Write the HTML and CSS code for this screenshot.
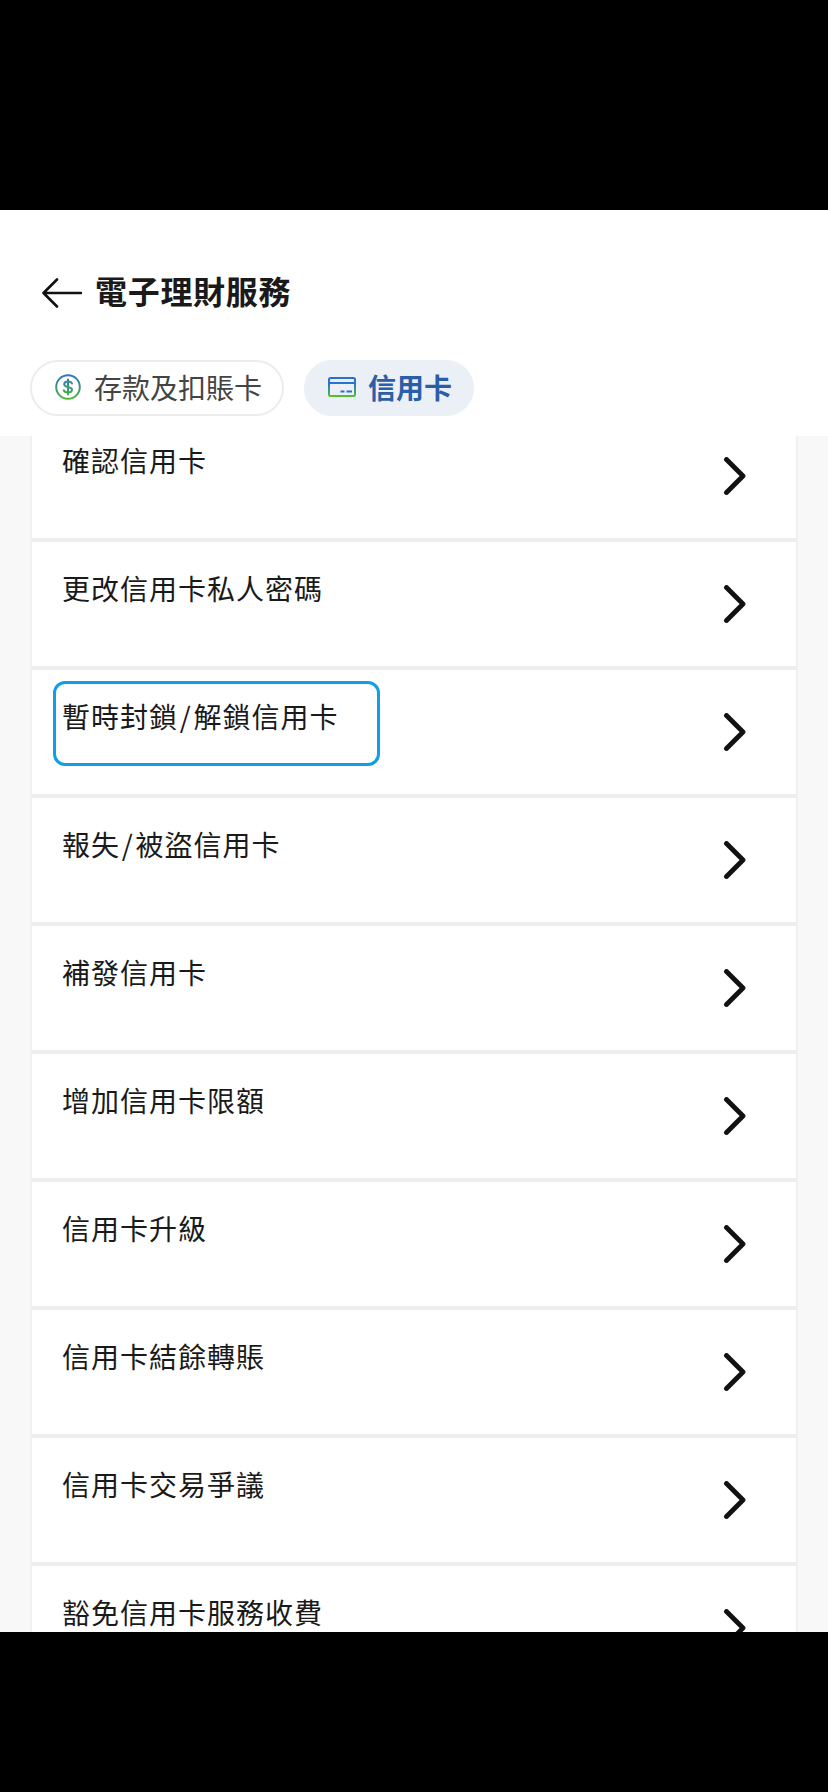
FILE: index.html
```html
<!DOCTYPE html>
<html lang="zh-Hant">
<head>
    <meta charset="UTF-8">
    <meta name="viewport" content="width=device-width, initial-scale=1.0">
    <title>電子理財服務</title>
    <link rel="stylesheet" href="styles.css">
</head>
<body>
    <div class="screen">
        <!-- Header -->
        <div class="header">
            <div class="title-bar">
                <svg class="back-icon" viewBox="0 0 40 30" fill="none" stroke="#111" stroke-width="2.6" stroke-linecap="round" stroke-linejoin="round">
                    <path d="M15 1.5L1.5 15L15 28.5M1.5 15H39"/>
                </svg>
                <h1>電子理財服務</h1>
            </div>
            <div class="tabs">
                <div class="tab">
                    <svg class="tab-icon" viewBox="0 0 26 26" fill="none" stroke="url(#dollarGrad)" stroke-width="2" stroke-linecap="round">
                        <defs>
                            <linearGradient id="dollarGrad" gradientUnits="userSpaceOnUse" x1="0" y1="0" x2="0" y2="26">
                                <stop offset="0" stop-color="#2a72d0"/>
                                <stop offset="1" stop-color="#4cbb2a"/>
                            </linearGradient>
                        </defs>
                        <circle cx="13" cy="13" r="11.8"/>
                        <path d="M17 9.6C16.6 8 15 7.4 13 7.4C10.8 7.4 9.2 8.4 9.2 10.2C9.2 14 17 12 17 15.8C17 17.6 15.2 18.4 13 18.4C10.8 18.4 9.2 17.8 8.8 16.2M13 5.4V20.6"/>
                    </svg>
                    <span>存款及扣賬卡</span>
                </div>
                <div class="tab active">
                    <svg class="tab-icon card" viewBox="0 0 28 20" fill="none" stroke="url(#cardGrad)" stroke-width="2">
                        <defs>
                            <linearGradient id="cardGrad" gradientUnits="userSpaceOnUse" x1="0" y1="0" x2="0" y2="20">
                                <stop offset="0" stop-color="#2a6fd4"/>
                                <stop offset="0.3" stop-color="#2a6fd4"/>
                                <stop offset="1" stop-color="#55c22c"/>
                            </linearGradient>
                        </defs>
                        <rect x="1" y="1" width="26" height="18" rx="1.5"/>
                        <path d="M1 6H27"/>
                        <path stroke="#2a6fd4" d="M12.5 14.5H16.5M18.5 14.5H24"/>
                    </svg>
                    <span>信用卡</span>
                </div>
            </div>
        </div>

        <!-- Menu list -->
        <div class="list">
            <div class="cards">
                <div class="row"><span class="label">確認信用卡</span><svg class="chevron" viewBox="0 0 22 38"><path d="M2.5 2.5L19 19L2.5 35.5"/></svg></div>
                <div class="row"><span class="label">更改信用卡私人密碼</span><svg class="chevron" viewBox="0 0 22 38"><path d="M2.5 2.5L19 19L2.5 35.5"/></svg></div>
                <div class="row focused"><span class="label">暫時封鎖<span class="slash">/</span>解鎖信用卡</span><svg class="chevron" viewBox="0 0 22 38"><path d="M2.5 2.5L19 19L2.5 35.5"/></svg></div>
                <div class="row"><span class="label">報失<span class="slash">/</span>被盜信用卡</span><svg class="chevron" viewBox="0 0 22 38"><path d="M2.5 2.5L19 19L2.5 35.5"/></svg></div>
                <div class="row"><span class="label">補發信用卡</span><svg class="chevron" viewBox="0 0 22 38"><path d="M2.5 2.5L19 19L2.5 35.5"/></svg></div>
                <div class="row"><span class="label">增加信用卡限額</span><svg class="chevron" viewBox="0 0 22 38"><path d="M2.5 2.5L19 19L2.5 35.5"/></svg></div>
                <div class="row"><span class="label">信用卡升級</span><svg class="chevron" viewBox="0 0 22 38"><path d="M2.5 2.5L19 19L2.5 35.5"/></svg></div>
                <div class="row"><span class="label">信用卡結餘轉賬</span><svg class="chevron" viewBox="0 0 22 38"><path d="M2.5 2.5L19 19L2.5 35.5"/></svg></div>
                <div class="row"><span class="label">信用卡交易爭議</span><svg class="chevron" viewBox="0 0 22 38"><path d="M2.5 2.5L19 19L2.5 35.5"/></svg></div>
                <div class="row"><span class="label">豁免信用卡服務收費</span><svg class="chevron" viewBox="0 0 22 38"><path d="M2.5 2.5L19 19L2.5 35.5"/></svg></div>
            </div>
        </div>
    </div>
</body>
</html>
```

FILE: styles.css
```css
/* General Styling */
html, body {
    margin: 0;
    padding: 0;
    height: 100%;
}

body {
    background: #000;
    font-family: "Noto Sans CJK TC", "Noto Sans", sans-serif;
    color: #1a1a1a;
    overflow: hidden;
}

.screen {
    margin-top: 210px;
    height: 1422px;
    display: flex;
    flex-direction: column;
    background: #fff;
}

/* Header */
.header {
    height: 226px;
    flex: none;
    background: #fff;
    box-sizing: border-box;
    padding-top: 66px;
}

.title-bar {
    display: flex;
    align-items: center;
    gap: 13px;
    padding-left: 42px;
    height: 34px;
}

.back-icon {
    width: 40px;
    height: 30px;
    flex: none;
}

h1 {
    margin: 0 0 6px;
    font-size: 32px;
    font-weight: 700;
    line-height: 34px;
    letter-spacing: 0.7px;
    color: #1a1a1a;
}

/* Tabs */
.tabs {
    display: flex;
    gap: 20px;
    margin-top: 50px;
    padding-left: 30px;
}

.tab {
    height: 56px;
    box-sizing: border-box;
    display: flex;
    align-items: center;
    gap: 13px;
    padding: 0 20px 2px 23px;
    border: 2px solid #ececec;
    border-radius: 28px;
    font-size: 28px;
    color: #444;
}

.tab.active {
    padding: 0 20px 2px 22px;
    gap: 12px;
    background: #ebf0f7;
    border-color: #ebf0f7;
    color: #2b5ea8;
    font-weight: 700;
}

.tab-icon {
    width: 26px;
    height: 26px;
    flex: none;
}

.tab-icon.card {
    width: 28px;
    height: 20px;
}

/* Menu list */
.list {
    flex: 1;
    min-height: 0;
    overflow: hidden;
    background: #f8f8f8;
    padding: 0 30px;
}

.cards {
    margin-top: -22px;
    border-left: 2px solid #f0f0f0;
    border-right: 2px solid #f0f0f0;
}

.row {
    height: 128px;
    box-sizing: border-box;
    display: flex;
    justify-content: space-between;
    align-items: center;
    padding: 0 50px 0 30px;
    background: #fff;
    border-bottom: 4px solid #eee;
    position: relative;
}

.label {
    align-self: flex-start;
    margin-top: 26px;
    font-size: 28px;
    line-height: 40px;
    letter-spacing: 1px;
    color: #1a1a1a;
}

.slash {
    padding: 0 1.7px;
}

.chevron {
    width: 22px;
    height: 38px;
    flex: none;
    fill: none;
    stroke: #111;
    stroke-width: 4.8;
    stroke-linecap: round;
    stroke-linejoin: round;
}

/* Accessibility focus ring */
.focused::after {
    content: "";
    position: absolute;
    left: 21px;
    top: 11px;
    width: 327px;
    height: 85px;
    box-sizing: border-box;
    border: 3px solid #0d9fe8;
    border-radius: 12px;
}
```
